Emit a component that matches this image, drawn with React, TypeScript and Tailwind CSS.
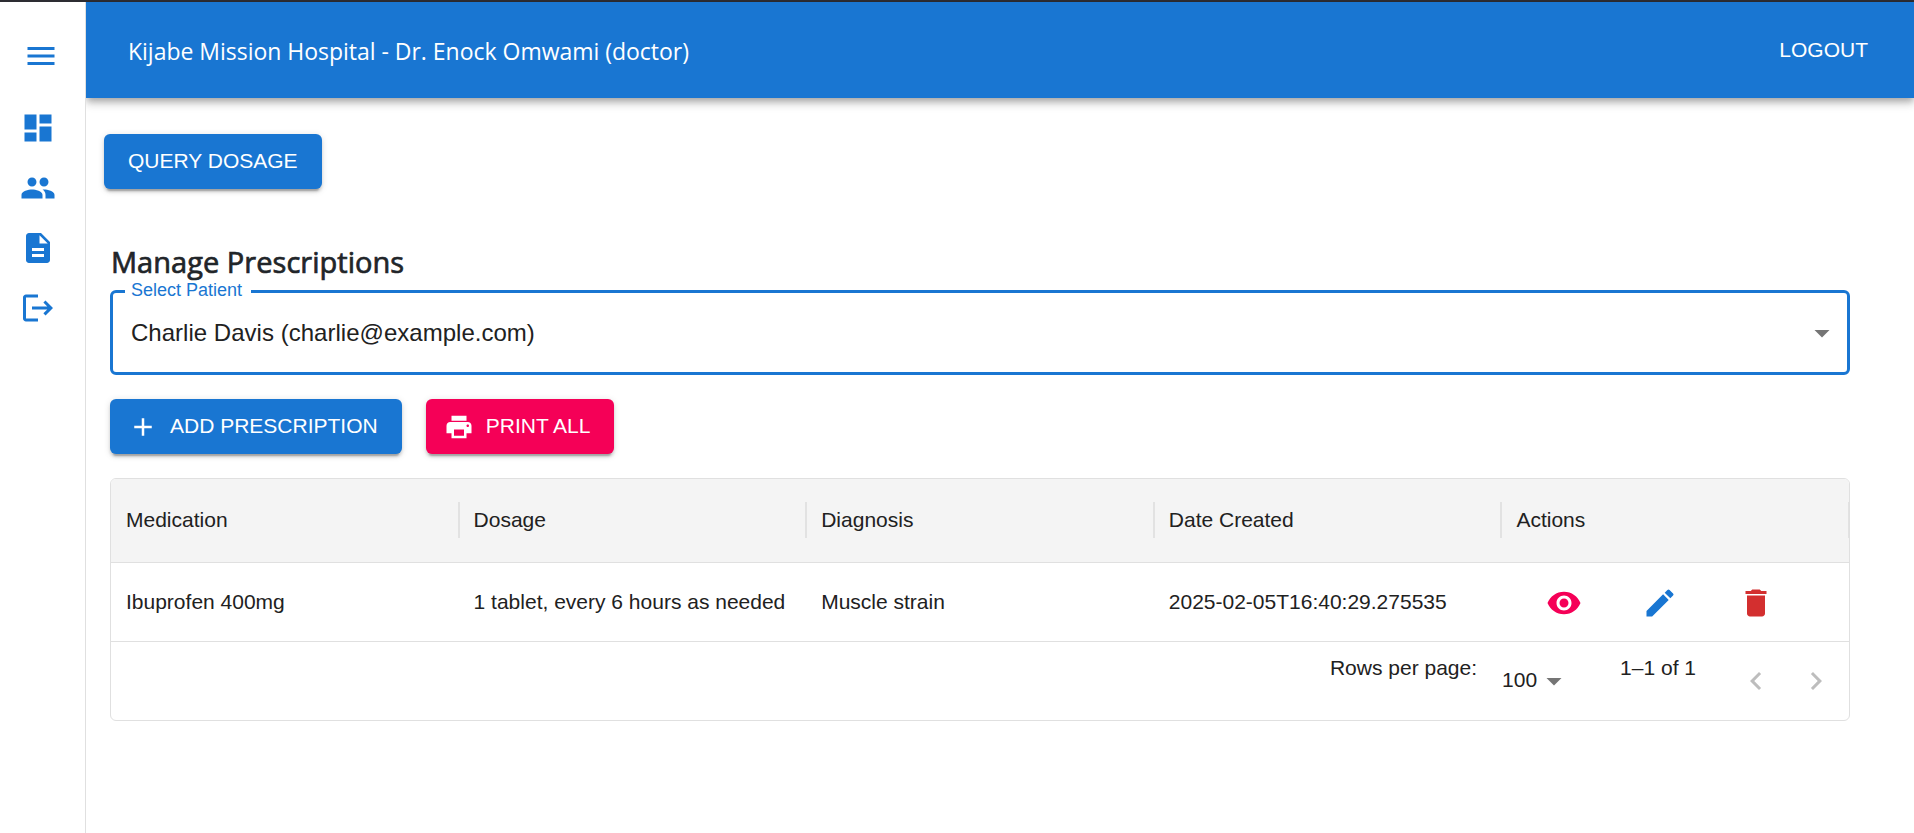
import {
  MdAdd,
  MdArrowDropDown,
  MdDashboard,
  MdDelete,
  MdDescription,
  MdEdit,
  MdKeyboardArrowLeft,
  MdKeyboardArrowRight,
  MdLogout,
  MdMenu,
  MdPeople,
  MdPrint,
  MdVisibility,
} from "react-icons/md";

const navItems = [
  { label: "Dashboard", Icon: MdDashboard },
  { label: "Patients", Icon: MdPeople },
  { label: "Prescriptions", Icon: MdDescription },
  { label: "Log out", Icon: MdLogout },
];

const columns = ["Medication", "Dosage", "Diagnosis", "Date Created", "Actions"];

const rows = [
  {
    medication: "Ibuprofen 400mg",
    dosage: "1 tablet, every 6 hours as needed",
    diagnosis: "Muscle strain",
    created: "2025-02-05T16:40:29.275535",
  },
];

const raised =
  "flex h-[55px] items-center rounded-md px-6 text-[21px] leading-9 text-white shadow-[0_4.5px_1.5px_-3px_rgba(0,0,0,0.2),0_3px_3px_0_rgba(0,0,0,0.14),0_1.5px_7.5px_0_rgba(0,0,0,0.12)]";

function Sidebar() {
  return (
    <nav className="relative z-10 flex w-[86px] shrink-0 flex-col border-r border-[#e0e0e0] bg-white pt-9 text-[#1976d2]">
      <button aria-label="Menu" className="ml-[23px] w-9">
        <MdMenu className="size-9" />
      </button>
      <ul className="mt-9 ml-5 flex flex-col gap-6">
        {navItems.map(({ label, Icon }) => (
          <li key={label} aria-label={label} className="h-9">
            <Icon className="size-9" />
          </li>
        ))}
      </ul>
    </nav>
  );
}

function Header() {
  return (
    <header className="flex h-24 shrink-0 items-center justify-between bg-[#1976d2] pr-[46px] pl-[42px] text-white shadow-[0_3px_6px_-1.5px_rgba(0,0,0,0.2),0_6px_7.5px_0_rgba(0,0,0,0.14),0_1.5px_15px_0_rgba(0,0,0,0.12)]">
      <h1 className="pt-0.5 font-['Open_Sans',sans-serif] text-[23px] leading-9 tracking-[-0.02px] whitespace-nowrap">
        Kijabe Mission Hospital - Dr. Enock Omwami (doctor)
      </h1>
      <button className="pb-px text-[21px] leading-9">LOGOUT</button>
    </header>
  );
}

function PatientSelect() {
  return (
    <div className="relative flex h-[85px] items-center justify-between rounded-md border-3 border-[#1976d2] pr-[7px] pl-[18px]">
      <label className="absolute -top-4 left-3 bg-white pr-[9px] pl-1.5 text-[18px] leading-[26px] text-[#1976d2]">
        Select Patient
      </label>
      <span className="text-2xl leading-9 tracking-[0.02px]">Charlie Davis (charlie@example.com)</span>
      <MdArrowDropDown className="size-9 text-[#757575]" />
    </div>
  );
}

function PrescriptionTable() {
  return (
    <section className="flex h-[243px] flex-col overflow-hidden rounded-md border border-[#e0e0e0] text-[21px] leading-8">
      <div className="grid h-[84px] shrink-0 grid-cols-5 border-b border-[#e0e0e0] bg-[#f4f4f4] pb-0.5">
        {columns.map((name) => (
          <div key={name} className="flex items-center justify-between pl-[15px]">
            <span>{name}</span>
            <span className="-mr-px h-9 w-0.5 bg-[#e2e2e2]" />
          </div>
        ))}
      </div>
      {rows.map((row) => (
        <div key={row.created} className="grid h-[79px] shrink-0 grid-cols-5 items-center border-b border-[#e0e0e0]">
          <span className="pl-[15px]">{row.medication}</span>
          <span className="pl-[15px] whitespace-nowrap">{row.dosage}</span>
          <span className="pl-[15px]">{row.diagnosis}</span>
          <span className="pl-[15px]">{row.created}</span>
          <div className="flex gap-[60px] pt-0.5 pl-[45px]">
            <MdVisibility className="size-9 text-[#f50057]" />
            <MdEdit className="size-9 text-[#1976d2]" />
            <MdDelete className="size-9 text-[#d32f2f]" />
          </div>
        </div>
      ))}
      <div className="flex flex-1 items-center justify-end pr-[15px] pb-px">
        <span className="mb-[26px]">Rows per page:</span>
        <span className="mb-0.5 ml-[25px]">100</span>
        <MdArrowDropDown className="mr-[48px] -ml-px size-9 text-[#757575]" />
        <span className="mb-[26px]">1–1 of 1</span>
        <MdKeyboardArrowLeft className="ml-[42px] size-9 text-[#bdbdbd]" />
        <MdKeyboardArrowRight className="ml-6 size-9 text-[#bdbdbd]" />
      </div>
    </section>
  );
}

export default function App() {
  return (
    <div className="flex h-[833px] flex-col overflow-hidden bg-white font-['Liberation_Sans',Arial,sans-serif] text-[#212121]">
      <div className="h-0.5 shrink-0 bg-[#2d2d33]" />
      <div className="flex flex-1">
        <Sidebar />
        <div className="flex min-w-0 flex-1 flex-col">
          <Header />
          <main className="flex flex-col pt-9 pr-16 pl-6">
            <button className={`${raised} -ml-1.5 self-start bg-[#1976d2] pb-0.5`}>QUERY DOSAGE</button>
            <h2 className="relative z-10 mt-[55px] h-[46px] pl-px font-['Open_Sans',sans-serif] text-[29px] leading-9 tracking-[0.03px] text-[#212529] [-webkit-text-stroke:0.7px_#212529]">
              Manage Prescriptions
            </h2>
            <PatientSelect />
            <div className="mt-6 mb-6 flex gap-6">
              <button className={`${raised} bg-[#1976d2]`}>
                <MdAdd className="mr-3 -ml-1.5 size-[30px]" />
                <span className="pb-0.5">ADD PRESCRIPTION</span>
              </button>
              <button className={`${raised} bg-[#f50057]`}>
                <MdPrint className="mr-3 -ml-1.5 size-[30px]" />
                <span className="pb-0.5">PRINT ALL</span>
              </button>
            </div>
            <PrescriptionTable />
          </main>
        </div>
      </div>
    </div>
  );
}
